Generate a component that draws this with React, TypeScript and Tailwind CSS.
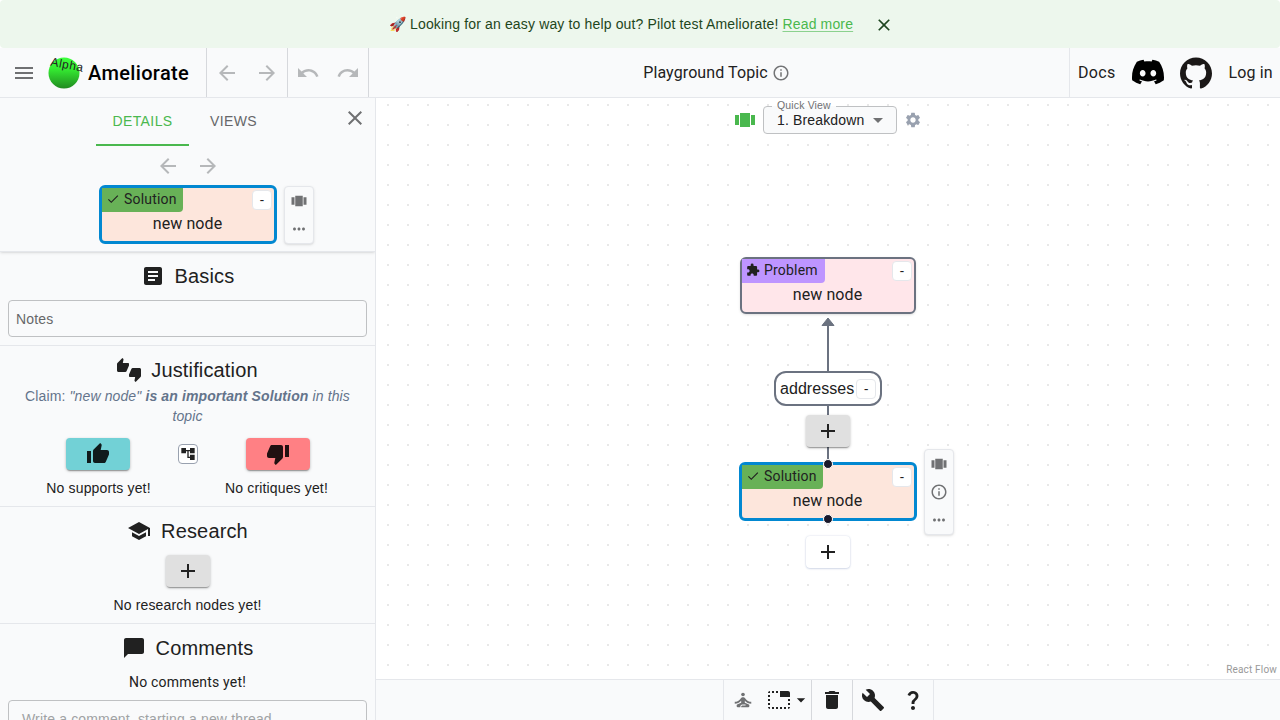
import type { ReactNode } from "react";
import {
  MdAccountTree,
  MdAdd,
  MdArrowBack,
  MdArrowDropDown,
  MdArrowForward,
  MdArticle,
  MdBuild,
  MdChatBubble,
  MdCheck,
  MdClose,
  MdDelete,
  MdExtension,
  MdInfoOutline,
  MdMenu,
  MdMoreHoriz,
  MdQuestionMark,
  MdRedo,
  MdSchool,
  MdSelfImprovement,
  MdSettings,
  MdTabUnselected,
  MdThumbDown,
  MdThumbsUpDown,
  MdThumbUp,
  MdUndo,
  MdViewCarousel,
} from "react-icons/md";
import { SiDiscord, SiGithub } from "react-icons/si";

const roboto = "font-['Roboto',sans-serif]";

function Banner() {
  return (
    <div className="h-12 shrink-0 bg-white">
      <div className="flex h-full items-center justify-center rounded bg-[#edf7ed] pl-[3px] text-sm text-[#1e4620]">
        <span className="tracking-[0.15px]">
          🚀 Looking for an easy way to help out? Pilot test Ameliorate!{" "}
          <a className="text-[#4ab84e] underline decoration-[#4ab84e]/60 underline-offset-2">Read more</a>
        </span>
        <MdClose className="mt-0.5 ml-[21px] size-5" />
      </div>
    </div>
  );
}

function Logo() {
  return (
    <svg className="h-10 w-9 shrink-0 overflow-visible" viewBox="0 0 36 40">
      <defs>
        <linearGradient id="ball" x1="0" y1="0" x2="0" y2="1">
          <stop offset="0" stopColor="#3dff3d" />
          <stop offset="0.35" stopColor="#35ee32" />
          <stop offset="1" stopColor="#218a20" />
        </linearGradient>
      </defs>
      <circle cx="16" cy="20" r="15.5" fill="url(#ball)" />
      <text x="2" y="12.500" transform="rotate(11 2 12.500)" fontSize="12" fontFamily="Liberation Sans" letterSpacing="0.55" fill="#222">
        Alpha
      </text>
    </svg>
  );
}

function Header() {
  return (
    <header className={`${roboto} flex h-[50px] shrink-0 items-stretch border-b border-gray-200 bg-gray-50 tracking-[0.15px]`}>
      <div className="flex w-[207px] items-center border-r border-[#d6d8dc] pl-3">
        <MdMenu className="size-6 text-[#6f7072]" />
        <div className="ml-3">
          <Logo />
        </div>
        <span className="ml-1 text-xl font-medium tracking-[0.35px] text-black">Ameliorate</span>
      </div>
      <div className="flex w-[81px] items-center justify-around border-r border-[#d6d8dc] text-[#b6b8ba]">
        <MdArrowBack className="size-6" />
        <MdArrowForward className="size-6" />
      </div>
      <div className="flex w-[81px] items-center justify-around border-r border-[#d6d8dc] text-[#b6b8ba]">
        <MdUndo className="size-6" />
        <MdRedo className="size-6" />
      </div>
      <div className="flex flex-1 items-center justify-center gap-1 pr-[5px] text-base">
        <span className="tracking-[0.1px]">Playground Topic</span>
        <MdInfoOutline className="size-[18px] text-[#737476]" />
      </div>
      <div className="flex w-[211px] items-center border-l border-gray-200 pl-2 text-base">
        <span className="tracking-[0.3px]">Docs</span>
        <SiDiscord className="mb-px ml-[17px] size-8 shrink-0 text-black" />
        <SiGithub className="ml-4 size-8 shrink-0 text-[#1b1817]" />
        <span className="ml-4 whitespace-nowrap">Log in</span>
      </div>
    </header>
  );
}

function MinusButton({ className = "" }: { className?: string }) {
  return (
    <span className={`${roboto} flex size-5 shrink-0 items-center justify-center rounded border border-gray-200 bg-white text-sm leading-none ${className}`}>
      -
    </span>
  );
}

function NodeCard({ kind, selected }: { kind: "Problem" | "Solution"; selected?: boolean }) {
  const problem = kind === "Problem";
  return (
    <div
      className={`${roboto} flex flex-col rounded-md tracking-[0.15px] ${
        selected ? "h-[59px] w-[178px] border-3 border-[#0288d1]" : "h-[57px] w-44 border-2 border-[#6b7280] shadow"
      } ${problem ? "bg-[#ffe6ea]" : "bg-[#fde6dc]"}`}
    >
      <div className="flex h-6 justify-between">
        <div
          className={`flex h-6 items-center rounded-br pb-0.5 pl-1 text-sm tracking-[0.2px] ${
            problem ? "w-[83px] bg-[#be95ff]" : "w-[81px] bg-[#68b157]"
          }`}
        >
          {problem ? <MdExtension className="size-[14px]" /> : <MdCheck className="size-[14px]" />}
          <span className="ml-1">{kind}</span>
        </div>
        <MinusButton className="mt-0.5 mr-0.5" />
      </div>
      <div className="pr-px text-center text-base leading-6 tracking-[0.1px]">new node</div>
    </div>
  );
}

function Toolbar({ info }: { info?: boolean }) {
  return (
    <div className="flex w-[30px] flex-col items-center rounded border border-gray-200 bg-gray-50 text-[#707173] shadow">
      <span className="flex h-7 items-center">
        <MdViewCarousel className="size-[18px]" />
      </span>
      {info && (
        <span className="flex h-7 items-center">
          <MdInfoOutline className="size-[18px]" />
        </span>
      )}
      <span className="flex h-7 items-center">
        <MdMoreHoriz className="size-[18px]" />
      </span>
    </div>
  );
}

function AddButton({ light }: { light?: boolean }) {
  return (
    <div
      className={`flex h-8 w-11 items-center justify-center rounded ${
        light ? "bg-white shadow-[0_0_2px_rgba(30,60,140,0.18),0_1px_2px_rgba(30,60,140,0.15)]" : "bg-[#e0e0e0] shadow-[0_2px_1px_-1px_rgba(0,0,0,0.25),0_1px_3px_rgba(0,0,0,0.28)]"
      }`}
    >
      <MdAdd className="size-6" />
    </div>
  );
}

function SectionTitle({ icon, children }: { icon: ReactNode; children: ReactNode }) {
  return (
    <h2 className="flex h-8 items-center justify-center text-xl tracking-[0.15px]">
      {icon}
      <span className="ml-2.5">{children}</span>
    </h2>
  );
}

function DetailsPanel() {
  return (
    <aside className="flex w-[376px] shrink-0 flex-col overflow-hidden border-r border-gray-200 bg-gray-50 text-sm">
      <div className="relative z-10 h-[154px] shrink-0 border-b border-gray-200 shadow">
        <div className="flex h-12 pl-24 text-sm tracking-[0.4px]">
          <div className="flex w-[93px] items-center justify-center border-b-2 border-[#4ab84e] text-[#4ab84e]">DETAILS</div>
          <div className="flex w-[89px] items-center justify-center pb-0.5 text-[#666769]">VIEWS</div>
          <MdClose className="mt-2 ml-[65px] size-6 text-[#6f7072]" />
        </div>
        <div className="flex h-10 items-center justify-center gap-4 text-[#b6b8ba]">
          <MdArrowBack className="size-6" />
          <MdArrowForward className="size-6" />
        </div>
        <div className="flex items-start pl-[99px]">
          <div className="-mt-px">
            <NodeCard kind="Solution" selected />
          </div>
          <div className="ml-[7px]">
            <Toolbar />
          </div>
        </div>
      </div>

      <section className="h-[94px] shrink-0 border-b border-gray-200 px-2 pt-2">
        <SectionTitle icon={<MdArticle className="size-6" />}>Basics</SectionTitle>
        <div className="mt-2 flex h-[37px] items-center rounded border border-[#bfc1c3] pl-[7px] tracking-[0.15px] text-[#666769]">Notes</div>
      </section>

      <section className="h-[161px] shrink-0 border-b border-gray-200 pt-2">
        <SectionTitle icon={<MdThumbsUpDown className="size-6" />}>Justification</SectionTitle>
        <p className="px-4 text-center leading-5 tracking-[0.12px] text-[#64748b]">
          Claim:{" "}
          <em>
            "new node" <b>is an important Solution</b> in this topic
          </em>
        </p>
        <div className="mt-3 flex items-start pl-2">
          <div className="flex w-45 shrink-0 flex-col items-center">
            <div className="flex h-8 w-16 items-center justify-center rounded bg-[#72d1d6] shadow-[0_2px_1px_-1px_rgba(0,0,0,0.25),0_1px_3px_rgba(0,0,0,0.28)]">
              <MdThumbUp className="size-6 text-[#101b1c]" />
            </div>
            <span className="mt-2 pl-px tracking-[0.15px]">No supports yet!</span>
          </div>
          <div className="mt-1.5 -mx-2.5 flex size-5 shrink-0 items-center justify-center rounded border border-gray-400 bg-white">
            <MdAccountTree className="size-4" />
          </div>
          <div className="flex w-45 shrink-0 flex-col items-center">
            <div className="flex h-8 w-16 items-center justify-center rounded bg-[#ff8084] shadow-[0_2px_1px_-1px_rgba(0,0,0,0.25),0_1px_3px_rgba(0,0,0,0.28)]">
              <MdThumbDown className="size-6 text-[#211011]" />
            </div>
            <span className="mt-2 pr-[3px] tracking-[0.15px]">No critiques yet!</span>
          </div>
        </div>
      </section>

      <section className="flex h-[117px] shrink-0 flex-col items-center border-b border-gray-200 pt-2">
        <SectionTitle icon={<MdSchool className="size-6" />}>Research</SectionTitle>
        <div className="mt-2">
          <AddButton />
        </div>
        <span className="mt-2 tracking-[0.15px]">No research nodes yet!</span>
      </section>

      <section className="shrink-0 px-2 pt-2">
        <SectionTitle icon={<MdChatBubble className="size-6" />}>Comments</SectionTitle>
        <div className={`${roboto} mt-2 text-center tracking-[0.2px]`}>No comments yet!</div>
        <div className="mt-2 h-14 rounded border border-[#bfc1c3] pt-2 pl-[13px] tracking-[0.15px] text-[#a0a2a4]">
          Write a comment, starting a new thread...
        </div>
      </section>
    </aside>
  );
}

function Canvas() {
  return (
    <div className="relative flex-1 overflow-hidden bg-white">
      <svg className="absolute inset-0 size-full">
        <pattern id="dots" x="2" y="-3" width="20" height="20" patternUnits="userSpaceOnUse">
          <rect x="9" y="9" width="2" height="2" fill="#e8e8e8" />
        </pattern>
        <rect width="100%" height="100%" fill="url(#dots)" />
        <path d="M452 228V370" stroke="#6b7280" strokeWidth="2" />
        <path d="M452 220L458 227.500H446Z" fill="#6b7280" stroke="#6b7280" strokeLinejoin="round" />
      </svg>

      <div className="absolute top-2 left-[357px] flex items-center">
        <MdViewCarousel className="size-6 text-[#4ab84e]" />
        <div className="relative ml-1.5 flex h-7 w-[134px] items-center justify-between rounded border border-[#bfc1c3] bg-gray-50 pr-1.5 pl-[13px] text-sm tracking-[0.15px]">
          <span>1. Breakdown</span>
          <MdArrowDropDown className="size-6 text-[#707173]" />
          <span className="absolute -top-[9px] left-2 h-[13px] bg-gradient-to-b from-white from-65% to-gray-50 to-65% px-[5px] text-[10.5px] leading-[14px] text-[#707173]">Quick View</span>
        </div>
        <MdSettings className="ml-[7px] size-[18px] text-gray-400" />
      </div>

      <div className="absolute top-[159px] left-[364px]">
        <NodeCard kind="Problem" />
      </div>

      <div className="absolute top-[273px] left-[398px] flex h-[35px] w-[108px] items-center rounded-xl border-2 border-[#6b7280] bg-white pl-1 font-['Liberation_Sans',sans-serif] text-base">
        <span className="tracking-[0.05px]">addresses</span>
        <MinusButton className="ml-0.5" />
      </div>

      <div className="absolute top-[317px] left-[430px]">
        <AddButton />
      </div>

      <div className="absolute top-[364px] left-[363px]">
        <NodeCard kind="Solution" selected />
      </div>
      <span className="absolute top-[361px] left-[447px] size-2.5 rounded-full border border-white bg-[#1a192b]" />
      <span className="absolute top-[416px] left-[447px] size-2.5 rounded-full border border-white bg-[#1a192b]" />
      <div className="absolute top-[351px] left-[548px]">
        <Toolbar info />
      </div>
      <div className="absolute top-[438px] left-[430px]">
        <AddButton light />
      </div>

      <span className={`${roboto} absolute right-0 bottom-0 bg-white/50 px-[3px] py-0.5 text-[10px] tracking-[0.18px] text-[#999]`}>React Flow</span>
    </div>
  );
}

function BottomBar() {
  return (
    <div className="flex h-[41px] shrink-0 border-t border-gray-200 bg-gray-50 pl-[347px]">
      <div className="flex w-[88px] items-center border-l border-gray-200 pl-2">
        <MdSelfImprovement className="size-[22px] shrink-0 text-[#707173]" />
        <MdTabUnselected className="ml-[13px] size-6 shrink-0" />
        <MdArrowDropDown className="size-5 shrink-0" />
      </div>
      <div className="flex w-[41px] items-center justify-center border-l border-[#d6d8dc]">
        <MdDelete className="size-6" />
      </div>
      <div className="flex w-[82px] items-center justify-around border-x border-l-[#d6d8dc] border-r-gray-200">
        <MdBuild className="size-6" />
        <MdQuestionMark className="size-6" />
      </div>
    </div>
  );
}

export default function App() {
  return (
    <div className="flex h-[720px] w-[1280px] flex-col overflow-hidden bg-white font-['Liberation_Sans',sans-serif] text-[#212121]">
      <Banner />
      <Header />
      <div className="flex min-h-0 flex-1">
        <DetailsPanel />
        <main className="flex min-w-0 flex-1 flex-col">
          <Canvas />
          <BottomBar />
        </main>
      </div>
    </div>
  );
}
